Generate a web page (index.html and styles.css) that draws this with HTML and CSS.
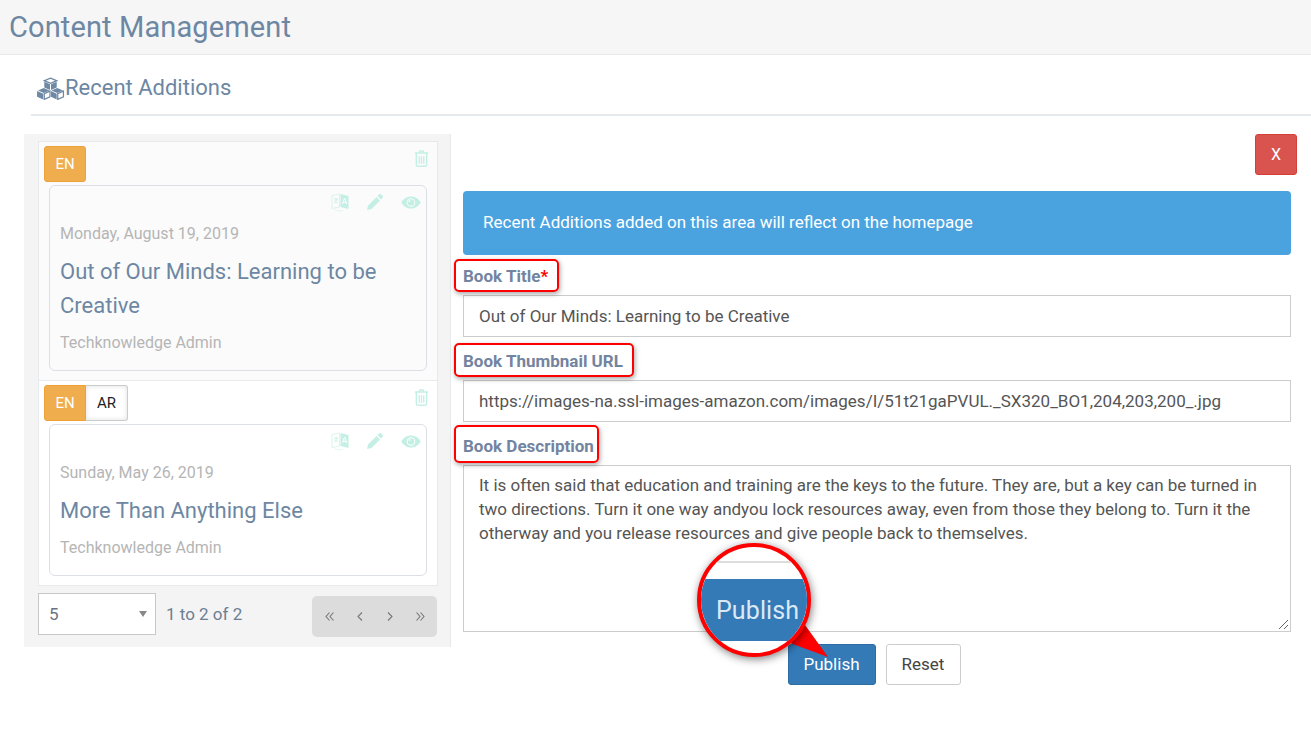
FILE: index.html
```html
<!DOCTYPE html>
<html lang="en">
<head>
<meta charset="utf-8">
<title>Content Management</title>
<link rel="stylesheet" href="styles.css">
</head>
<body>
<svg class="defs" width="0" height="0" aria-hidden="true">
  <symbol id="i-trash" viewBox="0 0 16 18"><path d="M5.500 2.500 6.300 1h3.400l.8 1.500M1 3.200h14M2.500 3.500v12.200c0 .9.600 1.500 1.500 1.500h8c.9 0 1.500-.6 1.500-1.500V3.500" fill="none" stroke="currentColor" stroke-width="1.500"/><path d="M5.600 6.500v8M8 6.500v8M10.400 6.500v8" fill="none" stroke="currentColor" stroke-width="1.400"/></symbol>
  <symbol id="i-lang" viewBox="0 0 18 20"><path d="M9.500 2 17.500 4v13l-8-2z" fill="currentColor"/><path d="M1 3.500 8.500 2v13L1 16.500z" fill="none" stroke="currentColor" stroke-width="1" opacity=".6"/><path d="M3 7h4M5 5.800V7M6.300 7C6 9 4.500 10.500 3 11M3.800 8c.5 1.300 1.700 2.400 3 3" fill="none" stroke="currentColor" stroke-width=".8"/><path d="M11.500 12 13.300 6.500h.6L15.700 12M12.200 10.300h2.800" fill="none" stroke="#fff" stroke-width="1"/><path d="M4 17.500c2 1.500 5 1.800 8 1" fill="none" stroke="currentColor" stroke-width=".8" opacity=".6"/></symbol>
  <symbol id="i-pencil" viewBox="0 0 18 18"><path d="M13.200 1.300c.5-.5 1.200-.5 1.700 0l1.800 1.800c.5.5.5 1.200 0 1.700L15 6.500 11.500 3zM10.500 4 14 7.500 5.500 16 1 17l1-4.500z" fill="currentColor"/></symbol>
  <symbol id="i-eye" viewBox="0 0 20 13"><path d="M10 .5C5.500.5 2 3.200.3 6.500 2 9.800 5.500 12.500 10 12.500s8-2.700 9.700-6C18 3.200 14.500.500 10 .500zm0 10.300A4.300 4.300 0 1 1 10 2.200a4.300 4.300 0 0 1 0 8.600z" fill="currentColor"/><circle cx="10" cy="6.500" r="3.300" fill="currentColor"/><circle cx="8.500" cy="5" r="1.100" fill="#fff" opacity=".7"/></symbol>
</svg>

<header class="page-head"><h1>Content Management</h1></header>

<section class="section-head">
  <h2>
    <svg class="cubes" viewBox="0 0 28 22" aria-hidden="true">
      <path d="M14 1 20 3.500 14 6 8 3.500z" fill="#fff" stroke="#6f88a5" stroke-width="1.300"/><path d="M8 4.500 13.500 7v5.500L8 10zM20 4.500 14.500 7v5.500L20 10z" fill="#6f88a5"/>
      <path d="M7.500 10.500 13 13 7.500 15.300 2 13z" fill="#6f88a5"/><path d="M1 13.500 7 16v5.500L1 19z" fill="#6f88a5"/><path d="M13.500 13.500 8 16v5.500l5.500-2.500z" fill="#fff" stroke="#6f88a5" stroke-width="1.200"/>
      <path d="M20.500 10.500 26 13 20.500 15.300 15 13z" fill="#6f88a5"/><path d="M14.500 13.500 20 16v5.500L14.500 19z" fill="#6f88a5"/><path d="M26.500 13.500 21 16v5.500l5.500-2.500z" fill="#fff" stroke="#6f88a5" stroke-width="1.200"/>
    </svg>Recent Additions
  </h2>
</section>

<main class="workspace">
  <aside class="list-panel">
    <div class="list-rows">
      <article class="row row-grey">
        <svg class="trash"><use href="#i-trash"/></svg>
        <div class="langs"><span class="lang lang-on lang-solo">EN</span></div>
        <div class="entry entry-grey">
          <div class="entry-tools">
            <svg class="tool-lang"><use href="#i-lang"/></svg>
            <svg class="tool-pencil"><use href="#i-pencil"/></svg>
            <svg class="tool-eye"><use href="#i-eye"/></svg>
          </div>
          <p class="entry-date">Monday, August 19, 2019</p>
          <h3 class="entry-title">Out of Our Minds: Learning to be Creative</h3>
          <p class="entry-author">Techknowledge Admin</p>
        </div>
      </article>
      <article class="row">
        <svg class="trash"><use href="#i-trash"/></svg>
        <div class="langs"><span class="lang lang-on">EN</span><span class="lang lang-off">AR</span></div>
        <div class="entry">
          <div class="entry-tools">
            <svg class="tool-lang"><use href="#i-lang"/></svg>
            <svg class="tool-pencil"><use href="#i-pencil"/></svg>
            <svg class="tool-eye"><use href="#i-eye"/></svg>
          </div>
          <p class="entry-date">Sunday, May 26, 2019</p>
          <h3 class="entry-title">More Than Anything Else</h3>
          <p class="entry-author">Techknowledge Admin</p>
        </div>
      </article>
    </div>
    <div class="pager">
      <div class="page-size"><span>5</span><i class="caret"></i></div>
      <span class="page-count">1 to 2 of 2</span>
      <div class="page-nav">
        <svg viewBox="0 0 10 10"><path d="M4.500 1 1 5l3.500 4M8.500 1 5 5l3.500 4"/></svg>
        <svg viewBox="0 0 10 10"><path d="M7 1 3 5l4 4"/></svg>
        <svg viewBox="0 0 10 10"><path d="M3 1l4 4-4 4"/></svg>
        <svg viewBox="0 0 10 10"><path d="M1.500 1 5 5 1.500 9M5.500 1 9 5 5.500 9"/></svg>
      </div>
    </div>
  </aside>

  <form class="editor">
    <div class="close-row"><button type="button" class="btn-close">X</button></div>
    <div class="alert">Recent Additions added on this area will reflect on the homepage</div>
    <label class="field-label field-first">Book Title<span class="req">*</span></label>
    <div class="input">Out of Our Minds: Learning to be Creative</div>
    <label class="field-label">Book Thumbnail URL</label>
    <div class="input">https://images-na.ssl-images-amazon.com/images/I/51t21gaPVUL._SX320_BO1,204,203,200_.jpg</div>
    <label class="field-label">Book Description</label>
    <div class="textarea">It is often said that education and training are the keys to the future. They are, but a key can be turned in two directions. Turn it one way andyou lock resources away, even from those they belong to. Turn it the otherway and you release resources and give people back to themselves.
      <svg class="grip" viewBox="0 0 12 12"><path d="M11 2 2 11M11 7l-4 4"/></svg>
    </div>
    <div class="actions">
      <button type="button" class="btn btn-primary">Publish</button>
      <button type="button" class="btn btn-plain">Reset</button>
    </div>
  </form>
</main>

<div class="mark mark-title"></div>
<div class="mark mark-url"></div>
<div class="mark mark-desc"></div>

<svg class="pointer" viewBox="0 0 60 60" aria-hidden="true"><path d="M15 11 0 29 38 43z" fill="#f00"/></svg>
<div class="lens">
  <div class="lens-rule"></div>
  <div class="lens-band">Publish</div>
</div>
</body>
</html>
```
FILE: styles.css
```css
* { box-sizing: border-box; }
html, body { margin: 0; padding: 0; }
body {
  position: relative;
  width: 1311px;
  height: 752px;
  overflow: hidden;
  background: #fff;
  font-family: Roboto, "Liberation Sans", sans-serif;
  color: #676a6c;
}
.defs { position: absolute; }

.page-head {
  height: 55px;
  background: #f6f6f6;
  border-bottom: 1px solid #e7eaec;
  padding: 9px 0 0 9px;
}
.page-head h1 {
  margin: 0;
  font-size: 29px;
  font-weight: 400;
  letter-spacing: .12px;
  line-height: 36px;
  color: #6d87a3;
}

.section-head {
  margin: 0 0 0 31px;
  height: 61px;
  border-bottom: 2px solid #e7eaec;
  padding-top: 17px;
}
.section-head h2 {
  margin: 0;
  display: flex;
  align-items: center;
  font-size: 22px;
  font-weight: 400;
  line-height: 32px;
  color: #6d87a3;
}
.cubes { width: 29px; height: 23px; margin: 0 0 0 5px; }

.workspace {
  display: flex;
  align-items: flex-start;
  margin: 18px 0 0 24px;
}

.list-panel {
  width: 427px;
  height: 513px;
  background: #f4f4f4;
  border-right: 1px solid #e7eaec;
  padding: 7px 12px 0 14px;
}
.list-rows { border: 1px solid #e7eaec; background: #fff; }
.row {
  position: relative;
  padding: 4px 10px 9px 5px;
  background: #fff;
}
.row + .row { border-top: 1px solid #e7eaec; }
.row-grey { background: #fbfbfb; }
.trash {
  position: absolute;
  top: 8px;
  right: 8px;
  width: 15px;
  height: 17px;
  color: #c4efe5;
}
.langs { display: flex; height: 36px; margin-bottom: 3px; }
.lang {
  display: flex;
  align-items: center;
  justify-content: center;
  font-size: 15px;
  height: 36px;
}
.lang-on {
  width: 42px;
  background: #f0ad4e;
  border: 1px solid #eea236;
  border-radius: 3px 0 0 3px;
  color: #fff;
}
.lang-solo { border-radius: 3px; }
.lang-off {
  width: 42px;
  background: #fff;
  border: 1px solid #ccc;
  border-left: 0;
  border-radius: 0 3px 3px 0;
  color: #222;
  box-shadow: inset 0 0 5px rgba(0,0,0,.13);
}
.entry {
  margin-left: 5px;
  border: 1px solid #dcdfe6;
  border-radius: 6px;
  background: #fff;
  padding: 6px 5px 15px 10px;
}
.entry-grey { background: #fbfbfb; }
.entry-tools {
  display: flex;
  justify-content: flex-end;
  align-items: center;
  height: 20px;
  color: #c4efe5;
}
.tool-lang { width: 18px; height: 20px; }
.tool-pencil { width: 18px; height: 18px; margin-left: 17px; }
.tool-eye { width: 20px; height: 13px; margin-left: 17px; }
.entry-date {
  margin: 10px 0 0;
  font-size: 16px;
  line-height: 24px;
  color: #b5b5b5;
}
.entry-title {
  margin: 9px 0 0;
  font-size: 22px;
  font-weight: 400;
  line-height: 34px;
  color: #6d87a3;
}
.entry-author {
  margin: 8px 0 0;
  font-size: 16px;
  line-height: 24px;
  color: #b5b5b5;
}

.pager {
  display: flex;
  align-items: center;
  margin-top: 5px;
}
.page-size {
  width: 118px;
  height: 42px;
  border: 1px solid #c8c8c8;
  background: #fff;
  display: flex;
  align-items: center;
  justify-content: space-between;
  padding: 0 8px 0 10px;
  font-size: 17px;
  color: #6b7280;
}
.caret {
  width: 0;
  height: 0;
  border-left: 4.500px solid transparent;
  border-right: 4.500px solid transparent;
  border-top: 6px solid #888;
}
.page-count {
  margin-left: 10px;
  font-size: 17px;
  color: #6d7f93;
}
.page-nav {
  margin: 5px 1px 0 auto;
  width: 125px;
  height: 41px;
  background: #dcdcdc;
  border-radius: 5px;
  display: flex;
  align-items: center;
  justify-content: space-between;
  padding: 0 12px 0 13px;
}
.page-nav svg {
  width: 10px;
  height: 11px;
  fill: none;
  stroke: #777;
  stroke-width: 1.100;
}

.editor {
  width: 828px;
  margin-left: 12px;
  position: relative;
}
.close-row { display: flex; justify-content: flex-end; margin-right: -6px; height: 57px; }
.btn-close {
  width: 42px;
  height: 41px;
  background: #d9534f;
  border: 1px solid #d43f3a;
  border-radius: 3px;
  color: #fff;
  font: 400 16px Roboto, sans-serif;
}
.alert {
  height: 64px;
  background: #4aa3df;
  border-radius: 4px;
  color: #fff;
  font-size: 17px;
  line-height: 63px;
  padding-left: 20px;
}
.field-label {
  display: block;
  height: 40px;
  padding-top: 10px;
  font-size: 17px;
  font-weight: 700;
  line-height: 24px;
  color: #7384a0;
}
.field-first { padding-top: 9px; }
.req { color: #f00; }
.input {
  height: 42px;
  border: 1px solid #ccc;
  padding: 0 15px;
  font-size: 17px;
  line-height: 40px;
  color: #555;
  white-space: nowrap;
}
.input + .field-label { height: 43px; padding-top: 12px; }
.textarea {
  position: relative;
  height: 167px;
  border: 1px solid #ccc;
  padding: 7px 15px;
  font-size: 17px;
  line-height: 24px;
  color: #555;
}
.grip {
  position: absolute;
  right: 1px;
  bottom: 1px;
  width: 12px;
  height: 12px;
  fill: none;
  stroke: #666;
  stroke-width: 1;
}
.actions {
  display: flex;
  justify-content: center;
  gap: 10px;
  margin-top: 12px;
  padding-right: 6px;
}
.btn {
  height: 41px;
  border-radius: 3px;
  padding: 0 0 2px;
  font: 400 17px Roboto, sans-serif;
}
.btn-primary {
  width: 88px;
  background: #337ab7;
  border: 1px solid #2e6da4;
  color: #fff;
}
.btn-plain {
  width: 75px;
  background: #fff;
  border: 1px solid #ccc;
  color: #444;
}

/* annotations over the screenshot */
.mark {
  position: absolute;
  left: 454px;
  border: 2px solid #f00;
  border-radius: 5px;
  box-shadow: 1px 2px 5px rgba(0,0,0,.35);
}
.mark-title { top: 259px; width: 105px; height: 33px; }
.mark-url { top: 343px; width: 180px; height: 34px; }
.mark-desc { top: 425px; width: 145px; height: 38px; }

.lens {
  position: absolute;
  left: 697px;
  top: 543px;
  width: 114px;
  height: 114px;
  border: 4px solid #f00;
  border-radius: 50%;
  background: #fff;
  overflow: hidden;
  box-shadow: 1px 2px 8px rgba(0,0,0,.5);
}
.lens-rule {
  position: absolute;
  left: 0;
  right: 0;
  top: 14px;
  height: 2px;
  background: #ddd;
}
.lens-band {
  position: absolute;
  left: 0;
  right: 0;
  top: 32px;
  height: 62px;
  background: #337ab7;
  color: #dbe9f5;
  font-size: 25px;
  letter-spacing: .1px;
  line-height: 63px;
  padding-left: 15px;
}
.pointer {
  position: absolute;
  left: 790px;
  top: 614px;
  width: 60px;
  height: 60px;
}
```
